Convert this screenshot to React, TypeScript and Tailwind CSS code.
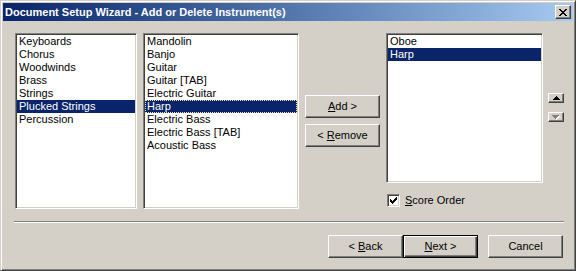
import React from "react";

const FONT = { fontFamily: '"Liberation Sans", Arial, sans-serif' };

function ListBox({
  items,
  selected,
  focused,
  className,
}: {
  items: string[];
  selected: number;
  focused?: boolean;
  className: string;
}) {
  return (
    <div
      className={`border border-t-[#808080] border-l-[#808080] border-r-white border-b-white bg-white shadow-[inset_1px_1px_0_#404040,inset_-1px_-1px_0_#d4d0c8] p-[1px] ${className}`}
    >
      <div className="flex flex-col">
        {items.map((it, i) => (
          <div
            key={it}
            className={
              i === selected
                ? `h-[13px] bg-[#0a246a] pl-[2px] text-[11px] leading-[13px] text-white ${
                    focused ? "outline-1 outline-dotted outline-[#f3e6a2] -outline-offset-1" : ""
                  }`
                : "h-[13px] pl-[2px] text-[11px] leading-[13px] text-black"
            }
          >
            {it}
          </div>
        ))}
      </div>
    </div>
  );
}

function Btn({
  children,
  def,
  className = "",
}: {
  children: React.ReactNode;
  def?: boolean;
  className?: string;
}) {
  if (def) {
    return (
      <div
        className={`flex items-center justify-center border border-black bg-[#d4d0c8] text-[11px] text-black shadow-[inset_1px_1px_0_#fff,inset_-1px_-1px_0_#404040,inset_-2px_-2px_0_#808080] ${className}`}
      >
        {children}
      </div>
    );
  }
  return (
    <div
      className={`flex items-center justify-center border border-t-white border-l-white border-r-[#404040] border-b-[#404040] bg-[#d4d0c8] text-[11px] text-black shadow-[inset_-1px_-1px_0_#808080] ${className}`}
    >
      {children}
    </div>
  );
}

export default function App() {
  return (
    <div
      style={FONT}
      className="flex h-[271px] w-[576px] flex-col border border-t-[#d4d0c8] border-l-[#d4d0c8] border-r-[#404040] border-b-[#404040] bg-[#d4d0c8] p-[2px] shadow-[inset_1px_1px_0_#fff,inset_-1px_-1px_0_#808080]"
    >
      {/* Title bar */}
      <div className="flex h-[18px] items-center bg-gradient-to-r from-[#0a246a] to-[#a6caf0] pl-[2px] pr-[2px]">
        <span className="flex-1 text-[11px] font-bold text-white">
          Document Setup Wizard - Add or Delete Instrument(s)
        </span>
        <div className="flex h-[14px] w-[16px] items-center justify-center border border-t-white border-l-white border-r-[#404040] border-b-[#404040] bg-[#d4d0c8] shadow-[inset_-1px_-1px_0_#808080]">
          <svg width="8" height="7" viewBox="0 0 8 7" shapeRendering="crispEdges">
            <path
              d="M0 0h2v1h-2zM6 0h2v1h-2zM1 1h2v1h-2zM5 1h2v1h-2zM2 2h4v1h-4zM3 3h2v1h-2zM2 4h4v1h-4zM1 5h2v1h-2zM5 5h2v1h-2zM0 6h2v1h-2zM6 6h2v1h-2z"
              fill="#000"
            />
          </svg>
        </div>
      </div>

      {/* Content */}
      <div className="flex flex-1 flex-col pl-[11px] pr-[9px] pt-[12px]">
        <div className="ml-[1px] flex">
          <ListBox
            className="h-[176px] w-[122px]"
            selected={5}
            items={[
              "Keyboards",
              "Chorus",
              "Woodwinds",
              "Brass",
              "Strings",
              "Plucked Strings",
              "Percussion",
            ]}
          />
          <ListBox
            className="ml-[6px] h-[176px] w-[156px]"
            selected={5}
            focused
            items={[
              "Mandolin",
              "Banjo",
              "Guitar",
              "Guitar [TAB]",
              "Electric Guitar",
              "Harp",
              "Electric Bass",
              "Electric Bass [TAB]",
              "Acoustic Bass",
            ]}
          />
          <div className="ml-[6px] flex w-[75px] flex-col gap-[6px] pt-[62px]">
            <Btn className="h-[23px]">
              <span>
                <u>A</u>dd &gt;
              </span>
            </Btn>
            <Btn className="h-[23px]">
              <span>
                &lt; <u>R</u>emove
              </span>
            </Btn>
          </div>
          <div className="ml-[6px] flex flex-col">
            <ListBox className="h-[150px] w-[157px]" selected={1} items={["Oboe", "Harp"]} />
            <div className="ml-[1px] mt-[9px] flex items-center">
              <div className="flex h-[13px] w-[13px] items-center justify-center border border-t-[#808080] border-l-[#808080] border-r-white border-b-white bg-white shadow-[inset_1px_1px_0_#404040,inset_-1px_-1px_0_#d4d0c8]">
                <svg width="7" height="7" viewBox="0 0 7 7" shapeRendering="crispEdges">
                  <path
                    d="M6 0h1v3h-1zM5 1h1v3h-1zM4 2h1v3h-1zM3 3h1v3h-1zM2 4h1v3h-1zM1 3h1v3h-1zM0 2h1v3h-1z"
                    fill="#000"
                  />
                </svg>
              </div>
              <span className="ml-[5px] text-[11px] text-black">
                <u>S</u>core Order
              </span>
            </div>
          </div>
          <div className="ml-[5px] flex flex-col pt-[60px]">
            <div className="flex h-[10px] w-[16px] items-center justify-center border border-t-white border-l-white border-r-[#404040] border-b-[#404040] bg-[#d4d0c8] shadow-[inset_-1px_-1px_0_#808080]">
              <svg width="7" height="4" viewBox="0 0 7 4" shapeRendering="crispEdges">
                <path d="M3 0h1v1h-1zM2 1h3v1h-3zM1 2h5v1h-5zM0 3h7v1h-7z" fill="#000" />
              </svg>
            </div>
            <div className="mt-[9px] flex h-[10px] w-[16px] items-center justify-center border border-t-white border-l-white border-r-[#404040] border-b-[#404040] bg-[#d4d0c8] shadow-[inset_-1px_-1px_0_#808080]">
              <svg width="8" height="5" viewBox="0 0 8 5" shapeRendering="crispEdges">
                <path d="M1 1h7v1h-7zM2 2h5v1h-5zM3 3h3v1h-3zM4 4h1v1h-1z" fill="#fff" />
                <path d="M0 0h7v1h-7zM1 1h5v1h-5zM2 2h3v1h-3zM3 3h1v1h-1z" fill="#808080" />
              </svg>
            </div>
          </div>
        </div>

        {/* Separator */}
        <div className="mt-[12px] h-[2px] w-[550px] border-t border-t-[#808080] border-b border-b-white" />

        {/* Bottom buttons */}
        <div className="mt-[12px] flex justify-end pr-[1px]">
          <Btn className="h-[23px] w-[75px]">
            <span>
              &lt; <u>B</u>ack
            </span>
          </Btn>
          <Btn def className="h-[23px] w-[75px]">
            <span>
              <u>N</u>ext &gt;
            </span>
          </Btn>
          <Btn className="ml-[10px] h-[23px] w-[75px]">
            <span>Cancel</span>
          </Btn>
        </div>
      </div>
    </div>
  );
}
